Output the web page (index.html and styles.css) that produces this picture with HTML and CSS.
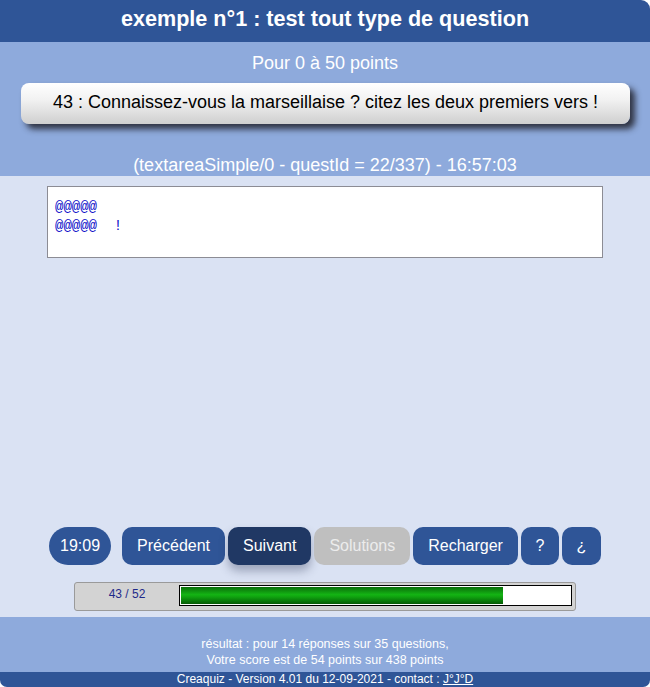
FILE: index.html
```html
<!DOCTYPE html>
<html lang="fr">
<head>
<meta charset="utf-8">
<title>Creaquiz</title>
<link rel="stylesheet" href="styles.css">
</head>
<body>
<div class="page">
  <header class="top">exemple n°1 : test tout type de question</header>
  <section class="band">
    <div class="points">Pour 0 à 50 points</div>
    <div class="question">43 : Connaissez-vous la marseillaise ? citez les deux premiers vers !</div>
    <div class="meta">(textareaSimple/0 - questId = 22/337) - 16:57:03</div>
  </section>
  <main class="main">
    <div class="answer">@@@@@<br>@@@@@&nbsp;&nbsp;!</div>
    <div class="spacer"></div>
    <nav class="buttons">
      <span class="btn timer">19:09</span>
      <span class="btn">Précédent</span>
      <span class="btn active">Suivant</span>
      <span class="btn disabled">Solutions</span>
      <span class="btn">Recharger</span>
      <span class="btn small">?</span>
      <span class="btn small">¿</span>
    </nav>
    <div class="progress">
      <span class="count">43 / 52</span>
      <div class="track"><div class="fill" style="width:82.7%"></div></div>
    </div>
  </main>
  <section class="result">
    <div>résultat : pour 14 réponses sur 35 questions,</div>
    <div>Votre score est de 54 points sur 438 points</div>
  </section>
  <footer class="foot">Creaquiz - Version 4.01 du 12-09-2021 - contact : <a href="#">J°J°D</a></footer>
</div>
</body>
</html>
```
FILE: styles.css
```css
html, body {
  margin: 0;
  padding: 0;
  background: #ffffff;
}
.page {
  width: 650px;
  height: 687px;
  font-family: "Liberation Sans", Arial, sans-serif;
  border-radius: 0 9px 7px 7px;
  overflow: hidden;
  display: flex;
  flex-direction: column;
}
.top {
  height: 42px;
  background: #2f5597;
  color: #fff;
  font-weight: bold;
  font-size: 21.6px;
  line-height: 38px;
  text-align: center;
}
.band {
  height: 134px;
  background: #8eaadc;
  box-sizing: border-box;
  padding-top: 10px;
  display: flex;
  flex-direction: column;
  align-items: center;
}
.points {
  color: #fff;
  font-size: 18px;
  line-height: 22px;
}
.question {
  margin-top: 9px;
  width: 609px;
  height: 41px;
  margin-left: 1px;
  box-sizing: border-box;
  border-radius: 8px;
  background: linear-gradient(#ffffff 0%, #f2f2f2 40%, #cfcfcf 100%);
  box-shadow: 5px 5px 6px rgba(30, 30, 40, 0.85);
  color: #000;
  font-size: 18px;
  line-height: 39px;
  text-align: center;
}
.meta {
  margin-top: 30px;
  color: #fff;
  font-size: 18px;
  line-height: 22px;
}
.main {
  height: 441px;
  background: #dae2f3;
  box-sizing: border-box;
  padding-top: 10px;
  display: flex;
  flex-direction: column;
  align-items: center;
}
.answer {
  width: 556px;
  height: 72px;
  box-sizing: border-box;
  background: #fff;
  border: 1px solid #8c8c94;
  padding: 11px 0 0 7px;
  font-family: "Liberation Mono", "Courier New", monospace;
  font-size: 14px;
  line-height: 19px;
  color: #0a0ac8;
}
.spacer {
  flex: 1;
}
.buttons {
  display: flex;
  gap: 3px;
  height: 38px;
}
.btn {
  display: flex;
  align-items: center;
  justify-content: center;
  height: 38px;
  box-sizing: border-box;
  padding: 0 15px;
  border-radius: 10px;
  background: #2f5597;
  color: #fff;
  font-size: 16px;
}
.btn.timer {
  width: 62px;
  padding: 0;
  border-radius: 19px;
  margin-right: 8px;
}
.btn.active {
  background: #203864;
  box-shadow: 0 6px 10px rgba(40, 50, 80, 0.35);
}
.btn.disabled {
  background: #bfbfbf;
  color: #ececec;
}
.btn.small {
  width: 38px;
  padding: 0;
}
.btn.small:last-child {
  width: 39px;
}
.progress {
  margin-top: 17px;
  width: 502px;
  height: 29px;
  box-sizing: border-box;
  border: 1px solid #9a9a9a;
  border-radius: 3px;
  background: #d3d3d3;
  display: flex;
  align-items: flex-start;
  padding: 2px 3px 0 0;
  margin-bottom: 6px;
}
.count {
  width: 104px;
  text-align: center;
  color: #1f2a8a;
  font-size: 12px;
  line-height: 18px;
}
.track {
  flex: 1;
  height: 21px;
  box-sizing: border-box;
  border: 1px solid #000;
  background: #fff;
  padding: 1px;
}
.fill {
  height: 100%;
  background: linear-gradient(#0a6e0a 0%, #14b414 45%, #0fa00f 60%, #065a06 100%);
}
.result {
  height: 55px;
  background: #8eaadc;
  box-sizing: border-box;
  padding-top: 19px;
  color: #fff;
  font-size: 12.5px;
  line-height: 16px;
  text-align: center;
}
.foot {
  height: 15px;
  background: #2f5597;
  color: #fff;
  font-size: 12px;
  line-height: 15px;
  text-align: center;
}
.foot a {
  color: #fff;
  text-decoration: underline;
}
```
